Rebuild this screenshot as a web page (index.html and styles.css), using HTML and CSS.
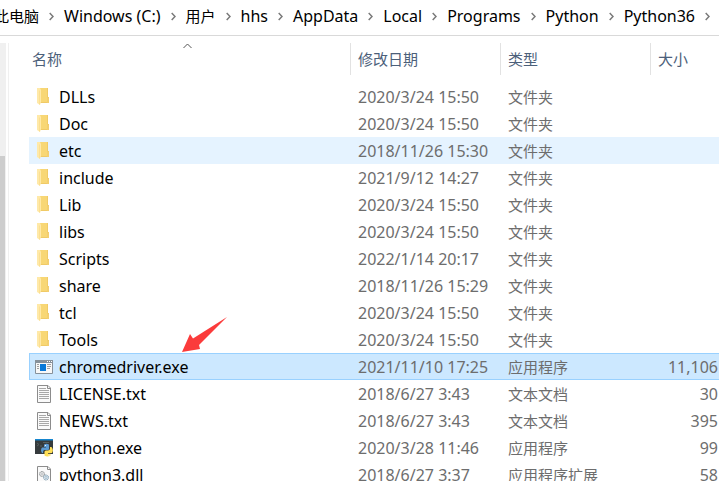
FILE: index.html
```html
<!DOCTYPE html>
<html lang="zh-CN">
<head>
<meta charset="utf-8">
<title>Python36</title>
<link rel="stylesheet" href="styles.css">
</head>
<body>
<svg class="defs" aria-hidden="true">
  <symbol id="folder" viewBox="0 0 18 18">
    <path d="M3 0h10v9h1v6H3z" fill="#f0ca66"/>
    <path d="M5 0h7v14H5z" fill="#f8d775"/>
    <path d="M12 9.500h2V15h-2z" fill="#f3cf70"/>
    <path d="M2 0h3l1 2v12l-1 3-3-2z" fill="#ffe9a8"/>
    <path d="M4.500 2.500v14" stroke="#fbdf92" stroke-width="1"/>
  </symbol>
  <symbol id="app" viewBox="0 0 18 18">
    <path d="M.5 2.500h17v13H.5z" fill="#f8f8f8" stroke="#87919a"/>
    <path d="M0 2h18v3H0z" fill="#87919a"/>
    <path d="M12 3.500h1M14 3.500h1M16 3.500h1" stroke="#fff"/>
    <path d="M5 6h6v7H5z" fill="#0878d7"/>
    <path d="M2 6.500h2M2 8.500h2M2 10.500h2M12 6.500h4M12 8.500h4M12 10.500h3" stroke="#a0a0a0"/>
  </symbol>
  <symbol id="text" viewBox="0 0 18 18">
    <path d="M2.500.5H13l2.500 2.500v14.500h-13z" fill="#fafafa" stroke="#8c8c8c"/>
    <path d="M12.500.5V3.500h3" fill="none" stroke="#8c8c8c"/>
    <path d="M4 3.500h7M4 5.500h10M4 7.500h10M4 9.500h10M4 11.500h10M4 13.500h10" stroke="#a8a8a8"/>
  </symbol>
  <symbol id="python" viewBox="0 0 18 18">
    <path d="M0 0h18v15H0z" fill="#363b3d"/>
    <path d="M0 0h18v1.500H0z" fill="#1686cf"/>
    <path d="M2 4l2 1.500L2 7M5 7h2M8 3.500h6" fill="none" stroke="#56605f"/>
    <path d="M9 5.500q2.500-1.500 5 0V10q0 1-1 1H9.500Q8 11 8 14H7q-2-3 0-5.500h4V8H9z" fill="#5b9ad2"/>
    <path d="M15 8h1.500q2.500 3 .5 6h-4v.8h2.500v1.700q-3 2-6 0V13q0-1.500 1.500-1.500H13q2 0 2-2z" fill="#ffdf55"/>
    <circle cx="10.500" cy="6.500" r=".6" fill="#fff"/>
    <circle cx="14" cy="16" r=".6" fill="#fff"/>
  </symbol>
  <symbol id="library" viewBox="0 0 18 18">
    <path d="M2.500.5H13l2.500 2.500v14.500h-13z" fill="#fafafa" stroke="#8c8c8c"/>
    <path d="M12.500.5V3.500h3" fill="none" stroke="#8c8c8c"/>
    <circle cx="7" cy="8" r="2.500" fill="#e8e8e8" stroke="#858b8e" stroke-dasharray="1.200 .5"/>
    <circle cx="7" cy="8" r="1" fill="#fff" stroke="#a0a5a8" stroke-width=".6"/>
    <circle cx="11" cy="11.500" r="2.500" fill="#dcebf5" stroke="#7995a8" stroke-dasharray="1.200 .5"/>
    <circle cx="11" cy="11.500" r="1" fill="#fff" stroke="#7995a8" stroke-width=".6"/>
  </symbol>
  <symbol id="chevron" viewBox="0 0 5 9">
    <path d="M.7 1l3.300 3.500L.7 8" fill="none" stroke="#7a7a7a" stroke-width="1.500"/>
  </symbol>
</svg>

<nav class="address" aria-label="路径">
  <ol class="crumbs">
    <li><a class="han" href="#">此电脑</a><svg class="chevron"><use href="#chevron"/></svg></li>
    <li><a href="#">Windows (C:)</a><svg class="chevron"><use href="#chevron"/></svg></li>
    <li><a class="han" href="#">用户</a><svg class="chevron"><use href="#chevron"/></svg></li>
    <li><a href="#">hhs</a><svg class="chevron"><use href="#chevron"/></svg></li>
    <li><a href="#">AppData</a><svg class="chevron"><use href="#chevron"/></svg></li>
    <li><a href="#">Local</a><svg class="chevron"><use href="#chevron"/></svg></li>
    <li><a href="#">Programs</a><svg class="chevron"><use href="#chevron"/></svg></li>
    <li><a href="#">Python</a><svg class="chevron"><use href="#chevron"/></svg></li>
    <li><a href="#">Python36</a><svg class="chevron"><use href="#chevron"/></svg></li>
  </ol>
</nav>

<div class="explorer">
  <div class="scrollbar"><div class="thumb"></div></div>
  <main class="content">
    <table class="files">
      <colgroup><col class="col-name"><col class="col-date"><col class="col-type"><col></colgroup>
      <thead>
        <tr>
          <th scope="col">名称<svg class="sort" viewBox="0 0 9 6"><path d="M.5 5l4-4 4 4" fill="none" stroke="#555"/></svg></th>
          <th scope="col">修改日期</th><th scope="col">类型</th><th scope="col">大小</th>
        </tr>
      </thead>
      <tbody>
        <tr><td><div class="name"><svg class="icon"><use href="#folder"/></svg>DLLs</div></td><td>2020/3/24 15:50</td><td class="han">文件夹</td><td></td></tr>
        <tr><td><div class="name"><svg class="icon"><use href="#folder"/></svg>Doc</div></td><td>2020/3/24 15:50</td><td class="han">文件夹</td><td></td></tr>
        <tr class="hovered"><td><div class="name"><svg class="icon"><use href="#folder"/></svg>etc</div></td><td>2018/11/26 15:30</td><td class="han">文件夹</td><td></td></tr>
        <tr><td><div class="name"><svg class="icon"><use href="#folder"/></svg>include</div></td><td>2021/9/12 14:27</td><td class="han">文件夹</td><td></td></tr>
        <tr><td><div class="name"><svg class="icon"><use href="#folder"/></svg>Lib</div></td><td>2020/3/24 15:50</td><td class="han">文件夹</td><td></td></tr>
        <tr><td><div class="name"><svg class="icon"><use href="#folder"/></svg>libs</div></td><td>2020/3/24 15:50</td><td class="han">文件夹</td><td></td></tr>
        <tr><td><div class="name"><svg class="icon"><use href="#folder"/></svg>Scripts</div></td><td>2022/1/14 20:17</td><td class="han">文件夹</td><td></td></tr>
        <tr><td><div class="name"><svg class="icon"><use href="#folder"/></svg>share</div></td><td>2018/11/26 15:29</td><td class="han">文件夹</td><td></td></tr>
        <tr><td><div class="name"><svg class="icon"><use href="#folder"/></svg>tcl</div></td><td>2020/3/24 15:50</td><td class="han">文件夹</td><td></td></tr>
        <tr><td><div class="name"><svg class="icon"><use href="#folder"/></svg>Tools</div></td><td>2020/3/24 15:50</td><td class="han">文件夹</td><td></td></tr>
        <tr class="selected"><td><div class="name"><svg class="icon"><use href="#app"/></svg>chromedriver.exe<svg class="arrow" viewBox="0 0 46 36"><path d="M0 35L8 17l3 4.500L45 0 17 28l1 4z" fill="#fb3b3b"/></svg></div></td><td>2021/11/10 17:25</td><td class="han">应用程序</td><td>11,106</td></tr>
        <tr><td><div class="name"><svg class="icon"><use href="#text"/></svg>LICENSE.txt</div></td><td>2018/6/27 3:43</td><td class="han">文本文档</td><td>30</td></tr>
        <tr><td><div class="name"><svg class="icon"><use href="#text"/></svg>NEWS.txt</div></td><td>2018/6/27 3:43</td><td class="han">文本文档</td><td>395</td></tr>
        <tr><td><div class="name"><svg class="icon"><use href="#python"/></svg>python.exe</div></td><td>2020/3/28 11:46</td><td class="han">应用程序</td><td>99</td></tr>
        <tr><td><div class="name"><svg class="icon"><use href="#library"/></svg>python3.dll</div></td><td>2018/6/27 3:37</td><td class="han">应用程序扩展</td><td>58</td></tr>
      </tbody>
    </table>
  </main>
</div>
</body>
</html>
```
FILE: styles.css
```css
* {
  box-sizing: border-box;
}

body {
  margin: 0;
  height: 100vh;
  display: flex;
  flex-direction: column;
  overflow: hidden;
  background: #fff;
  color: #000;
  font: 16px/20px "Noto Sans", "Noto Sans CJK SC", sans-serif;
}

.defs {
  display: none;
}

.address {
  flex: none;
  height: 36px;
  overflow: hidden;
  border-bottom: 1px solid #d9d9d9;
}

.crumbs {
  display: flex;
  align-items: center;
  height: 32px;
  margin: 0 0 0 -6px;
  padding: 0;
  list-style: none;
  white-space: nowrap;
}

.crumbs li {
  display: flex;
  flex: none;
  align-items: center;
}

.crumbs a {
  color: inherit;
  text-decoration: none;
}

.han,
th {
  font-family: "Noto Sans CJK SC", sans-serif;
  font-size: 15px;
}

.chevron {
  width: 5px;
  height: 9px;
  margin: 0 10px;
}

.explorer {
  flex: 1;
  display: flex;
  min-height: 0;
  padding-top: 7px;
}

.scrollbar {
  width: 6px;
  padding-top: 113px;
  background: #f0f0f0;
}

.thumb {
  width: 5px;
  height: 100%;
  background: #cdcdcd;
}

.content {
  flex: 1;
  min-width: 0;
  margin-left: 2px;
  padding-left: 20px;
  border-left: 1px solid #f0f0f0;
}

.files {
  width: 100%;
  table-layout: fixed;
  border-collapse: separate;
  border-spacing: 0;
  white-space: nowrap;
}

.col-name {
  width: 321px;
}

.col-date,
.col-type {
  width: 150px;
}

th {
  position: relative;
  height: 32px;
  padding: 0 0 0 7px;
  border-left: 1px solid #e2e2e2;
  color: #4c607a;
  font-weight: 400;
  text-align: left;
}

th:first-child {
  padding-left: 3px;
  border-left: 0;
}

.sort {
  position: absolute;
  top: 0;
  left: 154px;
  width: 9px;
  height: 6px;
}

thead::after {
  content: "";
  display: block;
  height: 8px;
}

td {
  height: 27px;
  padding: 0 0 0 8px;
  color: #6d6d6d;
}

td:first-child {
  padding-left: 6px;
  color: #000;
}

td:last-child {
  padding: 0 1px 0 0;
  text-align: right;
}

.name {
  position: relative;
  display: flex;
  align-items: center;
  gap: 6px;
}

.icon {
  width: 18px;
  height: 18px;
}

.hovered td {
  background: #e5f3ff;
}

.selected td {
  background: #cce8ff;
  border-top: 1px solid #99d1ff;
  border-bottom: 1px solid #99d1ff;
}

.selected td:first-child {
  padding-left: 5px;
  border-left: 1px solid #99d1ff;
}

.arrow {
  position: absolute;
  bottom: 24px;
  left: 147px;
  width: 46px;
  height: 36px;
}
```
